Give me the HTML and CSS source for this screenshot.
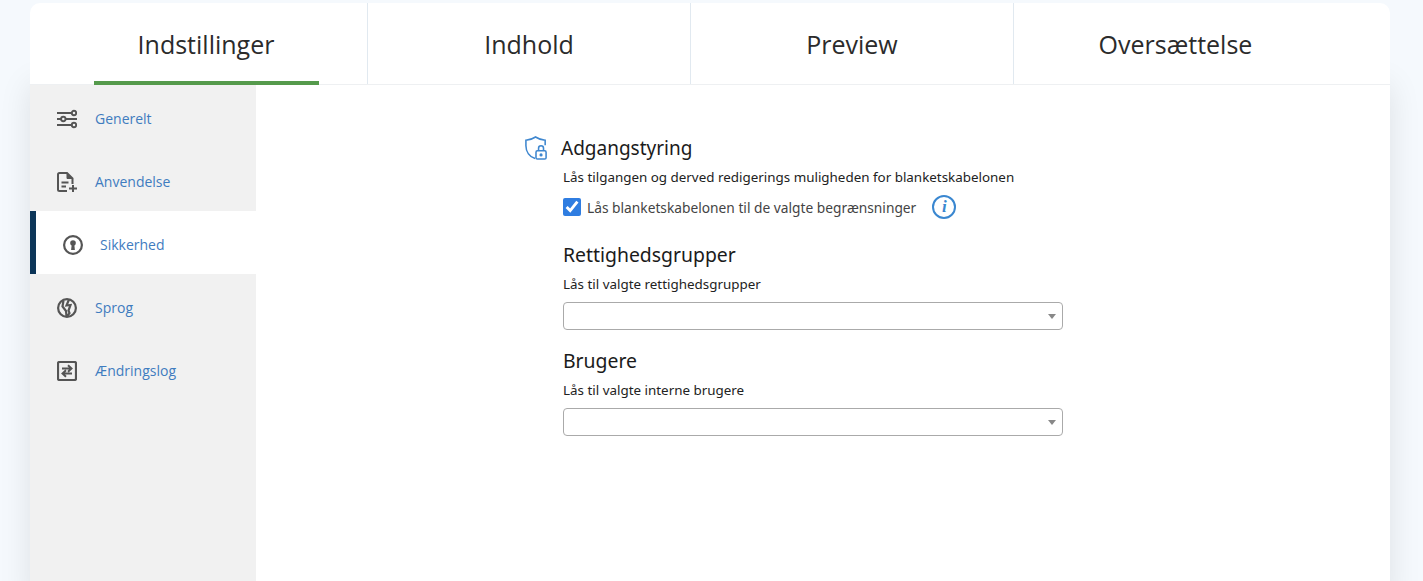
FILE: index.html
```html
<!DOCTYPE html>
<html lang="da">
<head>
  <meta charset="UTF-8">
  <meta name="viewport" content="width=device-width, initial-scale=1.0">
  <title>Blanketskabelon</title>
  <link rel="stylesheet" href="styles.css">
</head>
<body>
  <div class="page">
    <div class="tabs">
      <div class="tab active"><span>Indstillinger</span></div>
      <div class="tab"><span>Indhold</span></div>
      <div class="tab"><span>Preview</span></div>
      <div class="tab"><span>Oversættelse</span></div>
    </div>

    <div class="panel">
      <div class="sidebar">
        <a class="side-item">
          <svg class="side-icon" viewBox="0 0 20 20" fill="none" stroke="#555" stroke-width="1.900">
            <path d="M0 4h14M0 10h4M8.500 10h11.500M0 16h14"/>
            <circle cx="17" cy="4" r="2.200"/><circle cx="6.300" cy="10" r="2.200"/><circle cx="17" cy="16" r="2.200"/>
          </svg>
          Generelt
        </a>
        <a class="side-item">
          <svg class="side-icon" viewBox="0 0 20 20" fill="none" stroke="#555" stroke-width="2">
            <path d="M10 19H2.500A1.500 1.500 0 0 1 1 17.500v-15A1.500 1.500 0 0 1 2.500 1H10l5.500 5.500V12"/>
            <path d="M10 1.500V6.500h5z" fill="#555" stroke-width="1"/>
            <path d="M4.500 10.500h7M4.500 14.500h4.500M16 13v7M12 16.500h8"/>
          </svg>
          Anvendelse
        </a>
        <a class="side-item active">
          <svg class="side-icon" viewBox="0 0 20 20" fill="none" stroke="#555" stroke-width="2.200">
            <circle cx="10" cy="10" r="8.900"/>
            <circle cx="10" cy="8" r="2.800" fill="#555" stroke="none"/>
            <path d="M8.800 9h2.400l.7 6H8.100z" fill="#555" stroke="none"/>
          </svg>
          Sikkerhed
        </a>
        <a class="side-item">
          <svg class="side-icon" viewBox="0 0 20 20" fill="none" stroke="#555" stroke-width="2.200">
            <circle cx="10" cy="10" r="8.900"/>
            <path d="M12 1.500 9.500 7.500l4-.5-2 5.500 1 2.500-2 3M6.500 2.500 5.500 8.500l3.500 4.500.5 5.500"/>
          </svg>
          Sprog
        </a>
        <a class="side-item">
          <svg class="side-icon" viewBox="0 0 20 20" fill="none" stroke="#555" stroke-width="2.200">
            <rect x="1" y="1" width="18" height="18" rx="1.500"/>
            <path d="M5 7.500h9.500M11 4.200l3.500 3.300-3.500 3.300M15 12.500H5.500M9 9.200l-3.500 3.300 3.500 3.300" stroke-width="2"/>
          </svg>
          Ændringslog
        </a>
      </div>

      <div class="content">
        <div class="form">
          <div class="form-head">
            <svg class="shield" viewBox="0 0 24 26" fill="none" stroke="#3f87cf" stroke-width="1.700">
              <path d="M11 24.500C5 22.500 1 17 1 10.500V4.500C5 4.300 8.500 3 11.500 1c3 2 6 3.300 10.500 3.500V10"/>
              <rect x="12" y="16" width="11" height="9" rx="1.500"/>
              <path d="M14.800 16v-2.800a2.700 2.700 0 0 1 5.400 0V16"/>
              <circle cx="17.500" cy="20.500" r=".9" fill="#3f87cf"/>
            </svg>
            <h2>Adgangstyring</h2>
          </div>
          <p class="text">Lås tilgangen og derved redigerings muligheden for blanketskabelonen</p>
          <label class="check-row">
            <input type="checkbox" checked>
            <span>Lås blanketskabelonen til de valgte begrænsninger</span>
            <span class="info">i</span>
          </label>

          <h3>Rettighedsgrupper</h3>
          <p class="text">Lås til valgte rettighedsgrupper</p>
          <div class="select"></div>

          <h3 class="second">Brugere</h3>
          <p class="text">Lås til valgte interne brugere</p>
          <div class="select"></div>
        </div>
      </div>
    </div>
  </div>
</body>
</html>
```

FILE: styles.css
```css
html, body {
  height: 100%;
}

body {
  margin: 0;
  background-color: #f5f9fd;
  font-family: 'Open Sans', sans-serif;
  color: #222;
  overflow: hidden;
}

.page {
  margin: 3px 33px 0 30px;
}

.tabs {
  display: grid;
  grid-template-columns: repeat(4, 323px);
  height: 81px;
  padding-left: 15px;
  background-color: #fff;
  border-radius: 10px 10px 0 0;
  border-bottom: 1px solid #eef0f2;
  position: relative;
  z-index: 1;
}

.tab {
  display: flex;
  justify-content: center;
  padding-top: 23px;
  font-size: 25px;
  line-height: 36px;
  color: #2b2b2b;
  box-sizing: border-box;
  border-right: 1px solid #e1e9f0;
  position: relative;
}

.tab:last-child {
  border-right: none;
}

.tab.active::after {
  content: '';
  position: absolute;
  left: 49px;
  bottom: -1px;
  width: 225px;
  height: 4px;
  background-color: #559a4c;
}

.panel {
  display: flex;
  height: 520px;
  background-color: #fff;
  box-shadow: 0px 0px 30px rgba(0, 0, 0, 0.1);
}

.sidebar {
  width: 226px;
  flex-shrink: 0;
  background-color: #f1f1f1;
}

.side-item {
  display: flex;
  align-items: center;
  height: 63px;
  box-sizing: border-box;
  padding: 3px 0 0 27px;
  font-size: 14px;
  color: #3f7cbf;
}

.side-item.active {
  background-color: #fff;
  border-left: 6px solid #0c3558;
  padding-left: 27px;
}

.side-icon {
  width: 20px;
  height: 20px;
  margin: 2px 18px 0 0;
}

.side-item.active .side-icon {
  margin-right: 17px;
}

.content {
  flex: 1;
  padding: 48px 0 0 307px;
}

.form {
  width: 500px;
  font-family: 'Noto Sans', sans-serif;
}

.form-head {
  display: flex;
  align-items: center;
  height: 30px;
  margin-left: -38px;
}

.shield {
  width: 22px;
  height: 24px;
  margin-right: 14px;
}

h2, h3 {
  margin: 0;
  font-weight: 400;
  color: #1b1b1b;
}

h2 {
  font-size: 19px;
}

h3 {
  font-size: 19.400px;
  line-height: 26px;
  margin-top: 20px;
  margin-bottom: 2px;
}

h3.second {
  margin-top: 18px;
}

.text {
  margin: 0;
  font-size: 13.400px;
  line-height: 20px;
  padding-top: 4px;
}

.check-row {
  display: flex;
  align-items: center;
  height: 30px;
  margin-top: 5px;
  font-size: 13.750px;
  color: #444;
}

.check-row input {
  width: 18px;
  height: 18px;
  margin: 0 6px 0 0;
  accent-color: #2f7de1;
}

.info {
  width: 20px;
  height: 20px;
  margin-left: 16px;
  border: 2px solid #3a87d0;
  border-radius: 50%;
  color: #3a87d0;
  font-family: 'Liberation Serif', serif;
  font-style: italic;
  font-weight: 700;
  font-size: 17px;
  line-height: 20px;
  text-align: center;
}

.select {
  height: 26px;
  margin-top: 8px;
  border: 1px solid #aaa;
  border-radius: 4px;
  background-color: #fff;
  position: relative;
}

.select::after {
  content: '';
  position: absolute;
  right: 6px;
  top: 11px;
  border-left: 4px solid transparent;
  border-right: 4px solid transparent;
  border-top: 5px solid #888;
}
```
